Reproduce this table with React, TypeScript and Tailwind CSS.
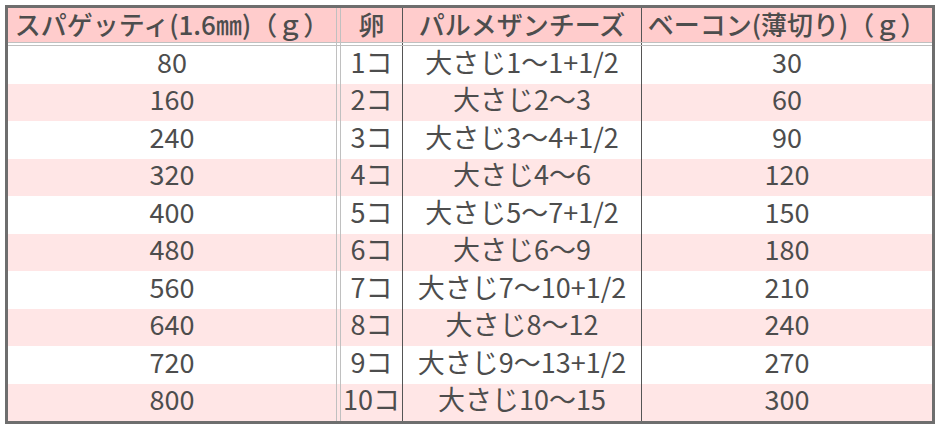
import React from 'react';

const rows = [
  ['80', '1コ', '大さじ1〜1+1/2', '30'],
  ['160', '2コ', '大さじ2〜3', '60'],
  ['240', '3コ', '大さじ3〜4+1/2', '90'],
  ['320', '4コ', '大さじ4〜6', '120'],
  ['400', '5コ', '大さじ5〜7+1/2', '150'],
  ['480', '6コ', '大さじ6〜9', '180'],
  ['560', '7コ', '大さじ7〜10+1/2', '210'],
  ['640', '8コ', '大さじ8〜12', '240'],
  ['720', '9コ', '大さじ9〜13+1/2', '270'],
  ['800', '10コ', '大さじ10〜15', '300'],
];

const font = { fontFamily: '"Noto Sans CJK JP", sans-serif' };

type RowProps = { cells: string[]; className: string; pad?: string };

const Row = ({ cells, className, pad = '' }: RowProps) => (
  <div className={`flex ${className}`}>
    <div className={`w-[329px] shrink-0 border-r border-[#c0c0c0] flex items-center justify-center ${pad}`}>{cells[0]}</div>
    <div
      className={`ml-[3px] w-[63px] shrink-0 border-l border-l-[#c0c0c0] border-r border-r-[#555] flex items-center justify-center ${pad}`}
    >
      {cells[1]}
    </div>
    <div className={`w-[239px] shrink-0 border-r border-[#555] flex items-center justify-center ${pad}`}>{cells[2]}</div>
    <div className={`flex-1 flex items-center justify-center ${pad}`}>{cells[3]}</div>
  </div>
);

export default function App() {
  return (
    <div className="bg-white w-[939px] h-[427px] p-[5px]" style={font}>
      <div className="w-[930px] border-[3px] border-[#6e6e6e] flex flex-col text-[#4d4d4d]">
        <Row
          cells={['スパゲッティ(1.6㎜)（ｇ）', '卵', 'パルメザンチーズ', 'ベーコン(薄切り)（ｇ）']}
          className="h-[35px] bg-[#ffcccc] border-b border-[#c0c0c0] text-[26px] font-medium leading-none"
          pad="pb-[3px]"
        />
        <Row cells={['', '', '', '']} className="h-[3px] bg-white border-b border-[#c0c0c0]" />
        {rows.map((r, i) => (
          <Row
            key={r[0]}
            cells={r}
            className={`h-[37.5px] text-[27px] leading-none ${i % 2 === 0 ? 'bg-white' : 'bg-[#ffe6e6]'}`}
            pad="pb-[7px]"
          />
        ))}
      </div>
    </div>
  );
}
